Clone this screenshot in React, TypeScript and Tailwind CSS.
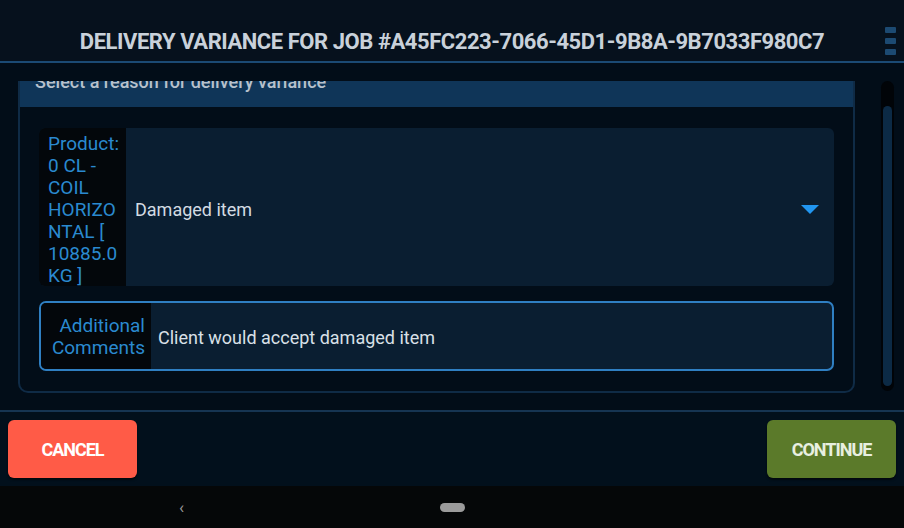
import React from 'react'

const font = { fontFamily: 'Roboto, "Noto Sans", sans-serif' }

const Header = () => (
  <header className="relative h-[63px] shrink-0 border-b-2 border-[#1b4a74] bg-[#06111d]">
    <h1 className="pt-[28px] text-center text-[22px] font-bold leading-[27px] tracking-[-0.45px] text-[#c9d1da]">
      DELIVERY VARIANCE FOR JOB #A45FC223-7066-45D1-9B8A-9B7033F980C7
    </h1>
    <div className="absolute right-[8px] top-[27px] flex flex-col gap-[5px]">
      <span className="h-[6px] w-[11px] rounded-[1px] bg-[#1c4a72]" />
      <span className="h-[6px] w-[11px] rounded-[1px] bg-[#1c4a72]" />
      <span className="h-[6px] w-[11px] rounded-[1px] bg-[#1c4a72]" />
    </div>
  </header>
)

const ReasonRow = () => (
  <div className="flex h-[158px] overflow-hidden rounded-[6px] bg-[#0a1e31]">
    <div className="w-[87px] shrink-0 bg-[#03070b] pl-[9px] pr-[3px] pt-[5px] text-[19px] leading-[22px] text-[#2a8ad0] [overflow-wrap:anywhere]">
      Product: 0 CL - COIL HORIZONTAL [ 10885.0 KG ]
    </div>
    <div className="flex flex-1 items-center justify-between pl-[9px] pr-[15px] pt-[4px]">
      <span className="text-[18px] text-[#d3dbe3]">Damaged item</span>
      <svg width="18" height="10" viewBox="0 0 18 10">
        <polygon points="0,1 18,1 9,10" fill="#2196f0" />
      </svg>
    </div>
  </div>
)

const CommentRow = () => (
  <div className="flex h-[70px] overflow-hidden rounded-[7px] border-2 border-[#2f7fc2] bg-[#0a1e31]">
    <div className="flex w-[110px] shrink-0 flex-col justify-center bg-[#03070b] pr-[6px] pt-[2px] text-right text-[19px] leading-[22px] text-[#2a8ad0]">
      <span>Additional</span>
      <span>Comments</span>
    </div>
    <div className="flex flex-1 items-center pl-[7px] pt-[2px] text-[18px] text-[#d9e0e7]">
      Client would accept damaged item
    </div>
  </div>
)

const Content = () => (
  <main className="flex h-[347px] shrink-0 bg-[#020d18] pt-[18px]">
    <div className="relative flex-1 overflow-hidden">
      <div className="-mt-[8px] ml-[18px] mr-[49px] rounded-b-[10px] border-2 border-t-0 border-[#0f2b46] bg-[#020d18]">
        <div className="h-[34px] bg-[#0f3558] pl-[15px] text-[18px] font-medium leading-[18px] text-[#b7c1cc]">
          Select a reason for delivery variance
        </div>
        <div className="flex flex-col gap-[15px] px-[19px] pb-[20px] pt-[21px]">
          <ReasonRow />
          <CommentRow />
        </div>
      </div>
      <div className="absolute right-[10px] top-[0px] h-[310px] w-[13px] rounded-full bg-[#010408]">
        <div className="mx-auto mt-[25px] h-[280px] w-[9px] rounded-full bg-[#0c2a45]" />
      </div>
    </div>
  </main>
)

const Footer = () => (
  <footer className="flex h-[76px] shrink-0 items-start justify-between border-t-2 border-[#163552] bg-[#02101c] px-[8px] pt-[8px]">
    <button className="h-[58px] w-[129px] rounded-[6px] bg-[#ff5b47] text-[18px] font-bold tracking-[-1px] text-white shadow-[0_2px_2px_rgba(0,0,0,0.5)]">
      CANCEL
    </button>
    <button className="h-[58px] w-[129px] rounded-[6px] bg-[#5b7a2a] text-[18px] font-bold tracking-[-1px] text-[#e8efe0] shadow-[0_2px_2px_rgba(0,0,0,0.5)]">
      CONTINUE
    </button>
  </footer>
)

const NavBar = () => (
  <nav className="relative h-[42px] shrink-0 bg-[#050708]">
    <span className="absolute left-[179px] top-[9px] text-[17px] text-[#9a9a9a]">‹</span>
    <span className="absolute left-[440px] top-[17px] h-[9px] w-[25px] rounded-full bg-[#9b9b9b]" />
  </nav>
)

export default function App() {
  return (
    <div className="flex h-[528px] w-[904px] flex-col overflow-hidden bg-[#020d18]" style={font}>
      <Header />
      <Content />
      <Footer />
      <NavBar />
    </div>
  )
}
